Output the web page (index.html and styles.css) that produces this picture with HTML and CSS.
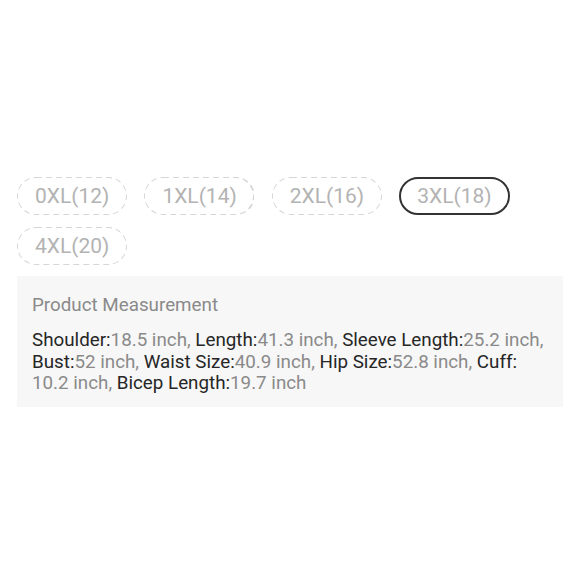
FILE: index.html
```html
<!DOCTYPE html>
<html lang="en">
<head>
  <meta charset="UTF-8">
  <title>Size Picker</title>
  <link rel="stylesheet" href="styles.css">
</head>
<body>
  <div class="size-panel">
    <div class="size-list">
      <span class="size-chip">0XL(12)</span>
      <span class="size-chip">1XL(14)</span>
      <span class="size-chip">2XL(16)</span>
      <span class="size-chip selected">3XL(18)</span>
      <span class="size-chip">4XL(20)</span>
    </div>

    <div class="measure-box">
      <div class="measure-title">Product Measurement</div>
      <p class="measure-text">
        <b>Shoulder:</b>18.5 inch, <b>Length:</b>41.3 inch, <b>Sleeve Length:</b>25.2 inch,
        <b>Bust:</b>52 inch, <b>Waist Size:</b>40.9 inch, <b>Hip Size:</b>52.8 inch, <b>Cuff:</b>
        10.2 inch, <b>Bicep Length:</b>19.7 inch
      </p>
    </div>
  </div>
</body>
</html>
```

FILE: styles.css
```css
body {
  margin: 0;
  font-family: Roboto, "Liberation Sans", sans-serif;
  background: #fff;
}
.size-panel {
  padding: 177px 17px 0 17px;
}
.size-list {
  display: flex;
  flex-wrap: wrap;
  gap: 12px 17px;
}
/* dashed outline drawn as svg so the dashes are longer than chrome's 1px ones */
.size-chip {
  display: inline-block;
  padding: 0 18px;
  height: 38px;
  line-height: 38px;
  font-size: 21px;
  color: #b3b3b3;
  border-radius: 19px;
  background: url("data:image/svg+xml,%3Csvg xmlns='http://www.w3.org/2000/svg' width='110' height='38'%3E%3Crect x='0' y='0' width='110' height='38' rx='19' fill='none' stroke='%23d6d6d6' stroke-width='2' stroke-dasharray='6 4'/%3E%3C/svg%3E") no-repeat;
}
.size-chip.selected {
  background: none;
  border: 2px solid #333;
  height: 34px;
  line-height: 34px;
  padding: 0 16px;
}
.measure-box {
  margin-top: 11px;
  background: #f7f7f7;
  padding: 18px 15px 12px 15px;
}
.measure-title {
  font-size: 18.8px;
  line-height: normal;
  color: #8a8a8a;
}
.measure-text {
  margin: 14px 0 0 0;
  font-size: 18.8px;
  line-height: 21.5px;
  color: #8a8a8a;
}
.measure-text b {
  font-weight: normal;
  color: #262626;
}
```
